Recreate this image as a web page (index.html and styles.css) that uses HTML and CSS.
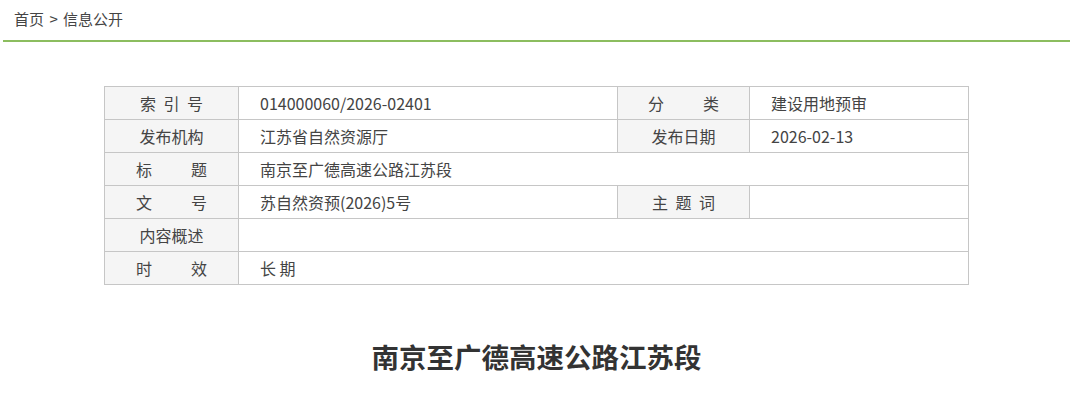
FILE: index.html
```html
<!DOCTYPE html>
<html lang="zh-CN">
<head>
<meta charset="utf-8">
<title>信息公开</title>
<link rel="stylesheet" href="styles.css">
</head>
<body>
<div class="page">
  <div class="crumb">首页 <span class="gt">&gt;</span> 信息公开</div>
  <div class="content">
    <table class="meta">
      <colgroup>
        <col class="c1"><col class="c2"><col class="c3"><col class="c4">
      </colgroup>
      <tr>
        <th><span class="sp">索 引 号</span></th>
        <td>014000060/2026-02401</td>
        <th><span class="j">分类</span></th>
        <td>建设用地预审</td>
      </tr>
      <tr>
        <th>发布机构</th>
        <td>江苏省自然资源厅</td>
        <th>发布日期</th>
        <td>2026-02-13</td>
      </tr>
      <tr>
        <th><span class="j">标题</span></th>
        <td colspan="3">南京至广德高速公路江苏段</td>
      </tr>
      <tr>
        <th><span class="j">文号</span></th>
        <td>苏自然资预(2026)5号</td>
        <th><span class="sp">主 题 词</span></th>
        <td></td>
      </tr>
      <tr>
        <th>内容概述</th>
        <td colspan="3"></td>
      </tr>
      <tr>
        <th><span class="j">时效</span></th>
        <td colspan="3">长 期</td>
      </tr>
    </table>
    <h1 class="title">南京至广德高速公路江苏段</h1>
  </div>
</div>
</body>
</html>
```

FILE: styles.css
```css
html, body {
  margin: 0;
  padding: 0;
  background: #fff;
}
body {
  font-family: "Microsoft YaHei", "Noto Sans CJK SC", "Noto Sans", sans-serif;
  color: #333;
}
.page {
  width: 1067px;
  margin-left: 3px;
}
.crumb {
  height: 40px;
  line-height: 38px;
  padding-left: 11px;
  font-size: 15px;
  color: #444;
  border-bottom: 2px solid #8cbd5f;
}
.crumb .gt {
  padding: 0 2px;
}
.content {
  padding-top: 44px;
}
.meta {
  border-collapse: collapse;
  width: 865px;
  margin: 0 auto;
  font-size: 16px;
  color: #444;
}
.meta .c1 { width: 134px; }
.meta .c2 { width: 379px; }
.meta .c3 { width: 132px; }
.meta .c4 { width: 219px; }
.meta th, .meta td {
  border: 1px solid #c6c6c6;
  height: 33px;
  padding: 0;
  box-sizing: border-box;
}
.meta th {
  background: #f5f5f5;
  font-weight: normal;
  text-align: center;
}
.meta td {
  padding-left: 21px;
  text-align: left;
}
.meta .j {
  display: inline-block;
  width: 71px;
  text-align: justify;
  text-align-last: justify;
}
.meta .sp {
  word-spacing: 4px;
}
.title {
  margin: 56px 0 0;
  text-align: center;
  font-size: 27.5px;
  font-weight: bold;
  color: #333;
  line-height: 30px;
}
```
